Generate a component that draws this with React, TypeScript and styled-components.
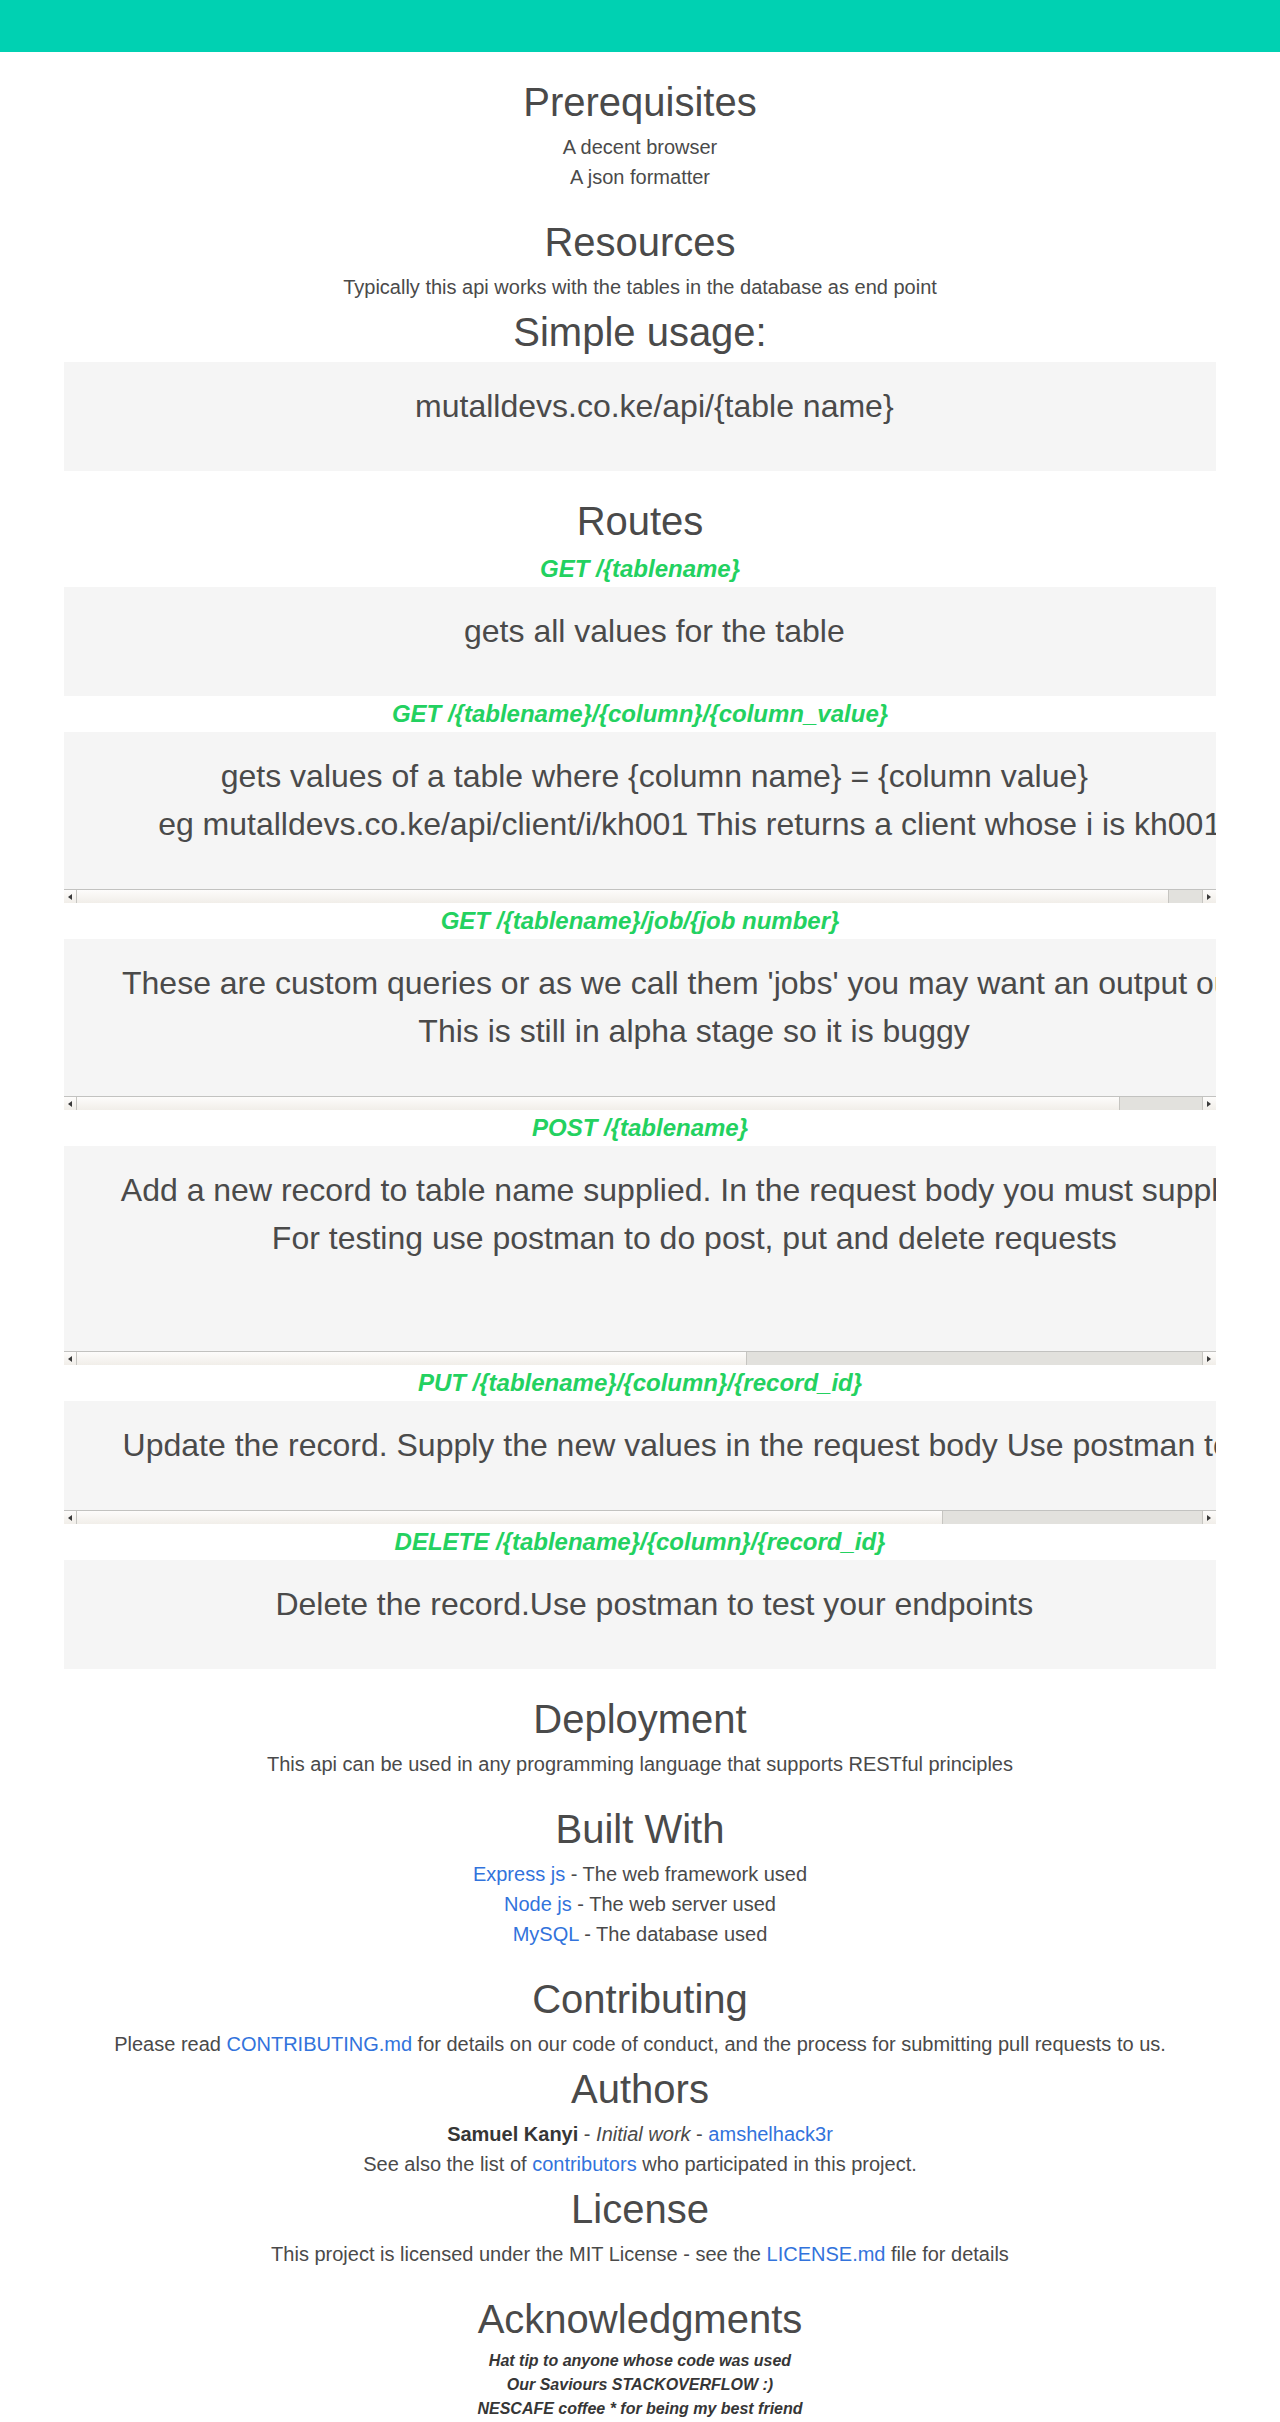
import React, { useLayoutEffect, useRef, useState } from 'react';
import styled, { createGlobalStyle } from 'styled-components';

const GlobalStyle = createGlobalStyle`
  * { box-sizing: border-box; }
  html, body { margin: 0; padding: 0; background: #ffffff; }
  body {
    font-family: "Liberation Sans", Arial, Helvetica, sans-serif;
    font-size: 20px;
    line-height: 1.5;
    color: #4a4a4a;
  }
`;

const Navbar = styled.nav`
  height: 52px;
  background: #00d1b2;
`;

const Main = styled.main`
  padding: 0 64px;
  text-align: center;
`;

const Section = styled.section<{ $flush?: boolean }>`
  margin-top: ${(p) => (p.$flush ? 0 : 20)}px;
`;

const Title = styled.h1`
  margin: 0;
  font-size: 40px;
  line-height: 60px;
  font-weight: 400;
  color: #4a4a4a;
`;

const Text = styled.p`
  margin: 0;
  font-size: 20px;
  line-height: 30px;
`;

const Link = styled.a`
  color: #3273dc;
  text-decoration: none;
`;

const Strong = styled.strong`
  color: #363636;
  font-weight: 700;
`;

const RouteTitle = styled.h4`
  margin: 0;
  font-family: "Liberation Sans", Arial, Helvetica, sans-serif;
  font-size: 24px;
  line-height: 36px;
  font-weight: 700;
  font-style: italic;
  color: #23d160;
`;

const CodeFrame = styled.div`
  background: #f5f5f5;
  text-align: center;
`;

const CodeBlock = styled.pre`
  margin: 0;
  padding: 20px 21px 41px 23px;
  font-family: "Liberation Sans", Arial, Helvetica, sans-serif;
  font-size: 32px;
  line-height: 48px;
  color: #4a4a4a;
  text-align: center;
  white-space: pre;
  overflow: hidden;
`;

const ScrollBar = styled.div`
  display: flex;
  height: 14px;
  border-top: 1px solid #c2c2c0;
  background: #e2e1dd;
`;

const thumbFace = 'linear-gradient(#fdfcfb, #f1eee9)';

const ScrollButton = styled.span<{ $dir: 'left' | 'right' }>`
  flex: none;
  width: ${(p) => (p.$dir === 'left' ? 13 : 14)}px;
  display: flex;
  align-items: center;
  justify-content: ${(p) => (p.$dir === 'left' ? 'flex-start' : 'flex-end')};
  padding: 0 5px 0 4px;
  background: ${thumbFace};
  border-right: ${(p) => (p.$dir === 'left' ? '1px solid #c6c5c1' : 'none')};
  border-left: ${(p) => (p.$dir === 'right' ? '1px solid #c6c5c1' : 'none')};

  &::before {
    content: '';
    display: block;
    border-style: solid;
    border-width: 3px ${(p) => (p.$dir === 'left' ? '4px 3px 0' : '0 3px 4px')};
    border-color: ${(p) =>
      p.$dir === 'left'
        ? 'transparent #3a3a3a transparent transparent'
        : 'transparent transparent transparent #3a3a3a'};
  }
`;

const ScrollTrack = styled.div`
  flex: 1;
  display: flex;
`;

const ScrollThumb = styled.div`
  height: 100%;
  background: ${thumbFace};
  border-right: 1px solid #c6c5c1;
`;

const Thanks = styled.p`
  margin: 0;
  font-size: 16px;
  line-height: 24px;
  font-weight: 700;
  font-style: italic;
  color: #363636;
`;

function CodeSample({ text }: { text: string }) {
  const ref = useRef<HTMLPreElement>(null);
  const [ratio, setRatio] = useState<number | null>(null);

  useLayoutEffect(() => {
    const measure = () => {
      const el = ref.current;
      if (!el) return;
      if (el.scrollWidth > el.clientWidth + 1) setRatio(el.clientWidth / el.scrollWidth);
      else setRatio(null);
    };
    measure();
    if (document.fonts && document.fonts.ready) document.fonts.ready.then(measure);
  }, [text]);

  return (
    <CodeFrame>
      <CodeBlock ref={ref}>{text}</CodeBlock>
      {ratio !== null && (
        <ScrollBar>
          <ScrollButton $dir="left" />
          <ScrollTrack>
            <ScrollThumb style={{ width: `${ratio * 100}%` }} />
          </ScrollTrack>
          <ScrollButton $dir="right" />
        </ScrollBar>
      )}
    </CodeFrame>
  );
}

type Route = { title: string; body: string };

const routes: Route[] = [
  { title: 'GET /{tablename}', body: '   gets all values for the table' },
  {
    title: 'GET /{tablename}/{column}/{column_value}',
    body:
      '   gets values of a table where {column name} = {column value}\n' +
      '        eg mutalldevs.co.ke/api/client/i/kh001 This returns a client whose i is kh001 ',
  },
  {
    title: 'GET /{tablename}/job/{job number}',
    body:
      "    These are custom queries or as we call them 'jobs' you may want an output out of.\n" +
      '            This is still in alpha stage so it is buggy',
  },
  {
    title: 'POST /{tablename}',
    body:
      '    Add a new record to table name supplied. In the request body you must supply all the fields of the table as a json object in the body\n' +
      '            For testing use postman to do post, put and delete requests\n ',
  },
  {
    title: 'PUT /{tablename}/{column}/{record_id}',
    body: '    Update the record. Supply the new values in the request body Use postman to test your endpoints :)',
  },
  {
    title: 'DELETE /{tablename}/{column}/{record_id}',
    body: '   Delete the record.Use postman to test your endpoints',
  },
];

const builtWith = [
  { name: 'Express js', note: 'The web framework used' },
  { name: 'Node js', note: 'The web server used' },
  { name: 'MySQL', note: 'The database used' },
];

const thanks = [
  'Hat tip to anyone whose code was used',
  'Our Saviours STACKOVERFLOW :)',
  'NESCAFE coffee * for being my best friend',
];

export default function App() {
  return (
    <>
      <GlobalStyle />
      <Navbar />
      <Main>
        <Section>
          <Title>Prerequisites</Title>
          <Text>A decent browser</Text>
          <Text>A json formatter</Text>
        </Section>

        <Section>
          <Title>Resources</Title>
          <Text>Typically this api works with the tables in the database as end point</Text>
          <Title>Simple usage:</Title>
          <CodeSample text={'   mutalldevs.co.ke/api/{table name}'} />
        </Section>

        <Section>
          <Title>Routes</Title>
          {routes.map((r) => (
            <React.Fragment key={r.title}>
              <RouteTitle>{r.title}</RouteTitle>
              <CodeSample text={r.body} />
            </React.Fragment>
          ))}
        </Section>

        <Section>
          <Title>Deployment</Title>
          <Text>This api can be used in any programming language that supports RESTful principles</Text>
        </Section>

        <Section>
          <Title>Built With</Title>
          {builtWith.map((b) => (
            <Text key={b.name}>
              <Link href="#">{b.name}</Link> - {b.note}
            </Text>
          ))}
        </Section>

        <Section>
          <Title>Contributing</Title>
          <Text>
            Please read <Link href="#">CONTRIBUTING.md</Link> for details on our code of conduct, and the
            process for submitting pull requests to us.
          </Text>
        </Section>

        <Section $flush>
          <Title>Authors</Title>
          <Text>
            <Strong>Samuel Kanyi</Strong> - <em>Initial work</em> - <Link href="#">amshelhack3r</Link>
          </Text>
          <Text>
            See also the list of <Link href="#">contributors</Link> who participated in this project.
          </Text>
        </Section>

        <Section $flush>
          <Title>License</Title>
          <Text>
            This project is licensed under the MIT License - see the <Link href="#">LICENSE.md</Link> file for
            details
          </Text>
        </Section>

        <Section>
          <Title>Acknowledgments</Title>
          {thanks.map((t) => (
            <Thanks key={t}>{t}</Thanks>
          ))}
        </Section>
      </Main>
    </>
  );
}
